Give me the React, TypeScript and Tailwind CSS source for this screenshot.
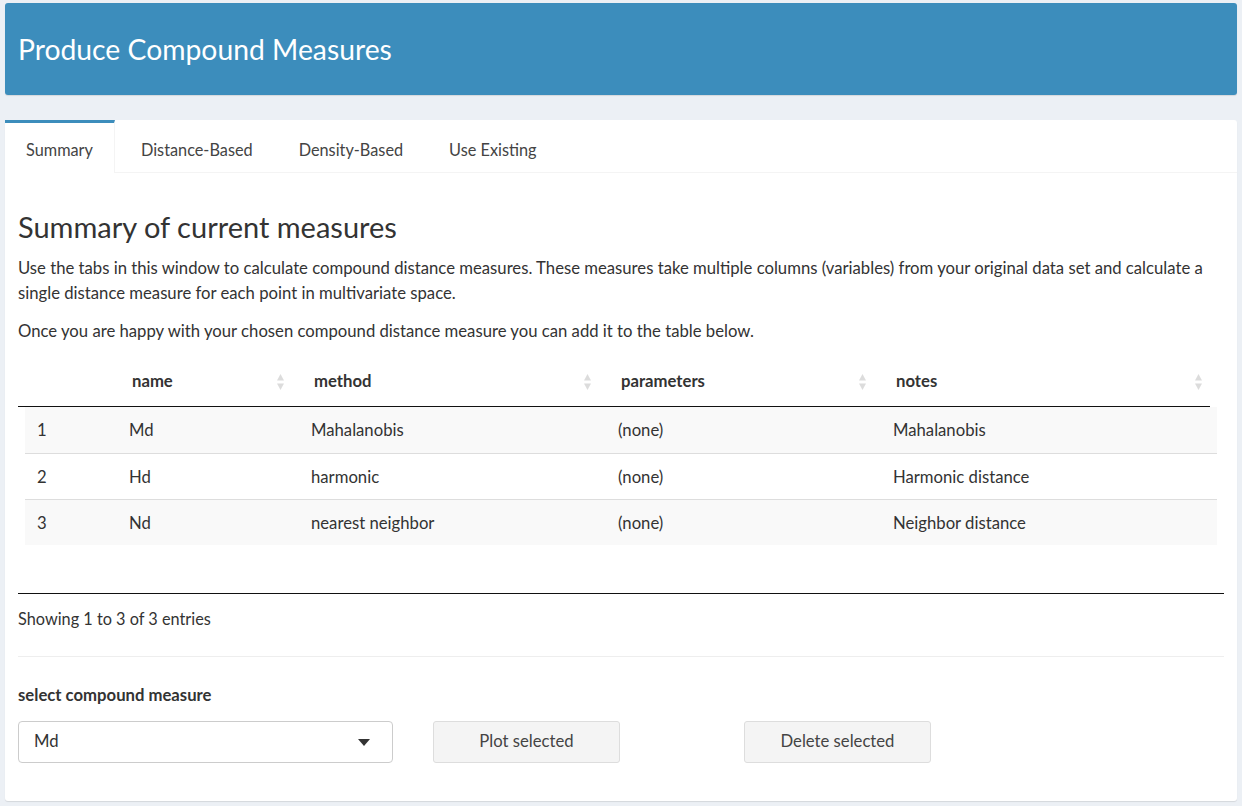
import React from "react";

const font = { fontFamily: "Lato, 'Liberation Sans', sans-serif" };

const tabs = ["Summary", "Distance-Based", "Density-Based", "Use Existing"];

const columns = [
  { key: "idx", label: "", width: "w-[92px]" },
  { key: "name", label: "name", width: "w-[182px]" },
  { key: "method", label: "method", width: "w-[307px]" },
  { key: "params", label: "parameters", width: "w-[275px]" },
  { key: "notes", label: "notes", width: "w-[336px]" },
];

const rows = [
  { idx: "1", name: "Md", method: "Mahalanobis", params: "(none)", notes: "Mahalanobis" },
  { idx: "2", name: "Hd", method: "harmonic", params: "(none)", notes: "Harmonic distance" },
  { idx: "3", name: "Nd", method: "nearest neighbor", params: "(none)", notes: "Neighbor distance" },
];

function SortIcon() {
  return (
    <svg width="9" height="18" viewBox="0 0 9 18" className="shrink-0">
      <path d="M4.5 1 L8 7.5 L1 7.5 Z" fill="#dcdcdc" />
      <path d="M4.5 17 L8 10.5 L1 10.5 Z" fill="#dcdcdc" />
    </svg>
  );
}

export default function App() {
  return (
    <div className="min-h-[806px] bg-[#ecf0f5] px-[5px] pt-[3px] pb-[5px] text-[#333]" style={font}>
      {/* header box */}
      <div className="h-[92px] rounded-[3px] bg-[#3c8dbc] shadow-[0_1px_1px_rgba(0,0,0,0.1)] flex items-center px-[13px]">
        <h1 className="text-[28.3px] text-white font-normal leading-none">Produce Compound Measures</h1>
      </div>

      {/* tab box */}
      <div className="mt-[25px] bg-white rounded-[3px] shadow-[0_1px_1px_rgba(0,0,0,0.1)] pb-[38px]">
        <div className="flex border-b border-[#f4f4f4] h-[53px]">
          {tabs.map((t, i) => (
            <div
              key={t}
              className={
                i === 0
                  ? "px-[21px] mr-[5px] border-t-[3px] border-[#3c8dbc] border-r border-r-[#f4f4f4] bg-white -mb-px flex items-center text-[16.3px] text-[#444] pt-[5px]"
                  : "px-[21px] mr-[4px] border-t-[3px] border-transparent flex items-center text-[16.3px] text-[#444] pt-[5px]"
              }
            >
              {t}
            </div>
          ))}
        </div>

        <div className="px-[13px]">
          <h2 className="mt-[39px] text-[29px] leading-none font-normal text-[#333]">Summary of current measures</h2>
          <p className="mt-[15px] text-[16.7px] leading-[25px]">
            Use the tabs in this window to calculate compound distance measures. These measures take multiple columns (variables) from your original data set and calculate a single distance measure for each point in multivariate space.
          </p>
          <p className="mt-[13px] text-[16.7px] leading-[25px]">
            Once you are happy with your chosen compound distance measure you can add it to the table below.
          </p>

          {/* table */}
          <div className="mt-[13px]">
            <div className="flex h-[50px] border-b border-[#111] w-[1192px]">
              {columns.map((c) => (
                <div key={c.key} className={`${c.width} flex items-center justify-between pl-[22px] pr-[7px]`}>
                  <span className="text-[16.7px] font-bold">{c.label}</span>
                  {c.label && <SortIcon />}
                </div>
              ))}
            </div>
            <div className="ml-[7px] w-[1192px]">
              {rows.map((r, i) => (
                <div
                  key={r.idx}
                  className={`flex h-[46px] items-center pt-[2px] ${i > 0 ? "border-t border-[#ddd]" : ""} ${i % 2 === 0 ? "bg-[#f9f9f9]" : "bg-white"}`}
                >
                  {columns.map((c) => (
                    <div key={c.key} className={`${c.width} pl-[12px] text-[16.7px]`}>
                      {r[c.key as keyof typeof r]}
                    </div>
                  ))}
                </div>
              ))}
            </div>
          </div>

          <div className="mt-[48px] border-t border-[#111]" />
          <div className="pt-[15px] text-[16.3px] leading-[20px]">Showing 1 to 3 of 3 entries</div>

          <div className="mt-[27px] border-t border-[#eee]" />

          <div className="mt-[28px] text-[16.7px] font-bold leading-[20px]">select compound measure</div>
          <div className="mt-[16px] flex items-center">
            <div className="w-[375px] h-[42px] rounded-[4px] border border-[#ccc] flex items-center justify-between pl-[15px] pr-[22px] text-[16.7px]">
              <span>Md</span>
              <svg width="12" height="7" viewBox="0 0 12 7">
                <path d="M0 0 L12 0 L6 7 Z" fill="#333" />
              </svg>
            </div>
            <button className="ml-[40px] w-[187px] h-[42px] rounded-[3px] border border-[#ddd] bg-[#f4f4f4] text-[16.7px] text-[#444]">
              Plot selected
            </button>
            <button className="ml-[124px] w-[187px] h-[42px] rounded-[3px] border border-[#ddd] bg-[#f4f4f4] text-[16.7px] text-[#444]">
              Delete selected
            </button>
          </div>
        </div>
      </div>
    </div>
  );
}
